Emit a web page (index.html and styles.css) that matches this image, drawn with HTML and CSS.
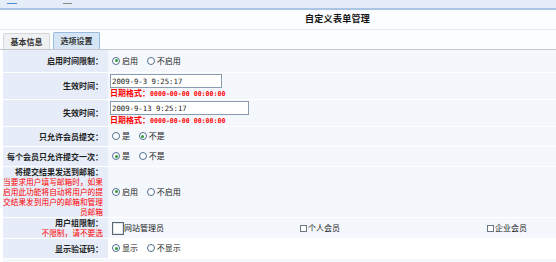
FILE: index.html
```html
<!DOCTYPE html>
<html lang="zh-CN">
<head>
  <meta charset="UTF-8">
  <title>自定义表单管理</title>
  <link rel="stylesheet" href="styles.css">
</head>
<body>

<div class="top-strip">
  <span class="mark mark-blue"></span>
  <span class="mark mark-gray"></span>
</div>

<div class="head">
  <h1 class="title">自定义表单管理</h1>
</div>

<div class="tabs">
  <span class="tab">基本信息</span>
  <span class="tab tab-active">选项设置</span>
</div>

<table class="form-table">
  <tr class="row-1">
    <td class="label">启用时间限制：</td>
    <td class="value">
      <span class="opt"><span class="radio checked"></span>启用</span>
      <span class="opt"><span class="radio"></span>不启用</span>
    </td>
  </tr>
  <tr class="row-2">
    <td class="label">生效时间：</td>
    <td class="value">
      <input type="text" class="date-input" value="2009-9-3 9:25:17">
      <div class="hint">日期格式：<span class="mono">0000-00-00 00:00:00</span></div>
    </td>
  </tr>
  <tr class="row-3">
    <td class="label">失效时间：</td>
    <td class="value">
      <input type="text" class="date-input wide" value="2009-9-13 9:25:17">
      <div class="hint">日期格式：<span class="mono">0000-00-00 00:00:00</span></div>
    </td>
  </tr>
  <tr class="row-4">
    <td class="label">只允许会员提交：</td>
    <td class="value">
      <span class="opt"><span class="radio"></span>是</span>
      <span class="opt"><span class="radio checked"></span>不是</span>
    </td>
  </tr>
  <tr class="row-5">
    <td class="label">每个会员只允许提交一次：</td>
    <td class="value">
      <span class="opt"><span class="radio checked"></span>是</span>
      <span class="opt"><span class="radio"></span>不是</span>
    </td>
  </tr>
  <tr class="row-6">
    <td class="label">将提交结果发送到邮箱：<br>
      <span class="note">当要求用户填写邮箱时，如果<br>启用此功能将自动将用户的提<br>交结果发到用户的邮箱和管理<br>员邮箱</span>
    </td>
    <td class="value">
      <span class="opt"><span class="radio checked"></span>启用</span>
      <span class="opt"><span class="radio"></span>不启用</span>
    </td>
  </tr>
  <tr class="row-7">
    <td class="label">用户组限制：<br><span class="note">不限制，请不要选</span></td>
    <td class="value">
      <div class="groups">
        <span class="opt"><span class="check check-big"></span>网站管理员</span>
        <span class="opt"><span class="check"></span>个人会员</span>
        <span class="opt"><span class="check"></span>企业会员</span>
      </div>
    </td>
  </tr>
  <tr class="row-8">
    <td class="label">显示验证码：</td>
    <td class="value white">
      <span class="opt"><span class="radio checked"></span>显示</span>
      <span class="opt"><span class="radio"></span>不显示</span>
    </td>
  </tr>
</table>

<div class="foot"></div>

</body>
</html>
```

FILE: styles.css
```css
body {
  margin: 0;
  font-family: "Noto Sans CJK SC", sans-serif;
  font-size: 8px;
  color: #222;
  background: #fff;
}
.top-strip {
  height: 8px;
  background: #e5edf8;
  display: flex;
  align-items: flex-start;
  padding-top: 3px;
  box-sizing: border-box;
}
.mark {
  display: block;
  height: 1px;
}
.mark-blue {
  width: 10px;
  margin-left: 7px;
  background: #4a8ad0;
}
.mark-gray {
  width: 9px;
  margin-left: 46px;
  background: #888;
}
.head {
  height: 19px;
  background: #fbfdff;
  border-top: 2px solid #a9c5e1;
  border-bottom: 1px solid #e4ebf4;
}
.title {
  margin: 0;
  padding: 4px 0 0 305px;
  font-size: 9px;
  line-height: 10px;
  letter-spacing: 0.3px;
  font-weight: bold;
  color: #111;
}
.tabs {
  height: 17px;
  padding: 2px 0 0 3px;
  background: #fbfdff;
  border-bottom: 1px solid #c4c7cb;
  display: flex;
  align-items: flex-end;
  gap: 3px;
}
.tab {
  width: 47px;
  height: 16px;
  box-sizing: border-box;
  border: 1px solid #d4d6d9;
  border-bottom: none;
  border-radius: 2px 2px 0 0;
  background: #eff0f2;
  text-align: center;
  line-height: 15px;
  font-weight: bold;
  color: #333;
}
.tab-active {
  height: 17px;
  background: #d6e5f5;
  border-color: #98bbdd;
  line-height: 16px;
}
.form-table {
  margin-left: 3px;
  width: calc(100% - 3px);
  border-collapse: collapse;
}
.form-table td {
  border-bottom: 1px solid #fff;
  padding: 0;
  vertical-align: middle;
}
.label {
  width: 100px;
  padding-right: 5px !important;
  background: #e6edf8;
  text-align: right;
  font-weight: bold;
  line-height: 10px;
  color: #222;
  white-space: nowrap;
}
.value {
  background: #f4f7fc;
  padding-left: 3px !important;
}
.value.white {
  background: #fff;
}
.row-1 td { height: 22px; }
.row-2 td { height: 23px; }
.row-3 td { height: 25px; }
.row-4 td { height: 19px; }
.row-5 td { height: 19px; }
.row-6 td { height: 48px; }
.row-7 td { height: 19px; }
.row-8 td { height: 19px; }
.note {
  color: #f00;
  font-weight: normal;
  font-size: 7.7px;
}
.opt {
  display: inline-flex;
  align-items: center;
  margin-right: 6px;
  line-height: 10px;
  color: #222;
}
.radio {
  width: 8px;
  height: 8px;
  box-sizing: border-box;
  border: 1px solid #52708f;
  border-radius: 50%;
  background: #fff;
  margin: 0 2px 0 1px;
  position: relative;
}
.radio.checked::after {
  content: "";
  position: absolute;
  left: 1.5px;
  top: 1.5px;
  width: 3px;
  height: 3px;
  border-radius: 50%;
  background: #2f9a3a;
}
.date-input {
  display: block;
  width: 112px;
  height: 14px;
  box-sizing: border-box;
  margin: 1px 0 0 -1px;
  padding: 0 1px;
  border: 1px solid #8a9cb2;
  font-family: "DejaVu Sans Mono", monospace;
  font-size: 7.3px;
  color: #222;
  background: #fff;
}
.date-input.wide {
  width: 139px;
}
.hint {
  color: #f00;
  font-weight: bold;
  line-height: 10px;
  margin-left: -1px;
}
.mono {
  font-family: "DejaVu Sans Mono", monospace;
  font-size: 6.6px;
  font-weight: bold;
}
.groups {
  display: grid;
  grid-template-columns: 187px 187px auto;
  align-items: center;
}
.check {
  width: 7px;
  height: 7px;
  box-sizing: border-box;
  border: 1px solid #6b7683;
  background: #fff;
  margin: 0 1px 0 2px;
}
.check-big {
  width: 12px;
  height: 13px;
  border: 1px solid #5a6470;
  box-shadow: inset 0 0 0 1px #dfe6ee;
  margin: 0 0 0 1px;
}
.foot {
  margin-left: 3px;
  height: 10px;
  background: #f4f7fc;
}
```
